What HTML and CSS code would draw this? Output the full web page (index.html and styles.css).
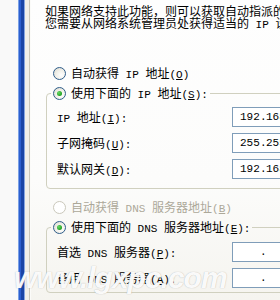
FILE: index.html
```html
<!DOCTYPE html>
<html lang="zh-CN">

<head>
    <meta charset="UTF-8">
    <meta name="viewport" content="width=device-width, initial-scale=1.0">
    <title>Internet 协议 (TCP/IP) 属性</title>
    <link rel="stylesheet" href="styles.css">
</head>

<body>
    <div class="screen">
        <div class="frame"></div>

        <div class="page">
            <p class="intro">如果网络支持此功能，则可以获取自动指派的<span class="en"> IP </span>设置。否则，<br>您需要从网络系统管理员处获得适当的<span class="en"> IP </span>设置。</p>

            <label class="radio-row first">
                <span class="radio"></span>
                <span>自动获得<span class="en"> IP </span>地址<span class="en">(<u>O</u>)</span></span>
            </label>

            <fieldset class="group">
                <legend>
                    <label class="radio-row">
                        <span class="radio checked"></span>
                        <span>使用下面的<span class="en"> IP </span>地址<span class="en">(<u>S</u>):</span></span>
                    </label>
                </legend>
                <div class="field">
                    <span class="field-label"><span class="en">IP </span>地址<span class="en">(<u>I</u>):</span></span>
                    <span class="ip-box">
                        <span class="seg">192</span><span class="dot">.</span><span class="seg">168</span><span class="dot">.</span><span class="seg">1</span><span class="dot">.</span><span class="seg">2</span>
                    </span>
                </div>
                <div class="field">
                    <span class="field-label">子网掩码<span class="en">(<u>U</u>):</span></span>
                    <span class="ip-box">
                        <span class="seg">255</span><span class="dot">.</span><span class="seg">255</span><span class="dot">.</span><span class="seg">255</span><span class="dot">.</span><span class="seg">0</span>
                    </span>
                </div>
                <div class="field">
                    <span class="field-label">默认网关<span class="en">(<u>D</u>):</span></span>
                    <span class="ip-box">
                        <span class="seg">192</span><span class="dot">.</span><span class="seg">168</span><span class="dot">.</span><span class="seg">1</span><span class="dot">.</span><span class="seg">1</span>
                    </span>
                </div>
            </fieldset>

            <label class="radio-row disabled">
                <span class="radio"></span>
                <span>自动获得<span class="en"> DNS </span>服务器地址<span class="en">(<u>B</u>)</span></span>
            </label>

            <fieldset class="group dns">
                <legend>
                    <label class="radio-row">
                        <span class="radio checked"></span>
                        <span>使用下面的<span class="en"> DNS </span>服务器地址<span class="en">(<u>E</u>):</span></span>
                    </label>
                </legend>
                <div class="field">
                    <span class="field-label">首选<span class="en"> DNS </span>服务器<span class="en">(<u>P</u>):</span></span>
                    <span class="ip-box">
                        <span class="seg"></span><span class="dot">.</span><span class="seg"></span><span class="dot">.</span><span class="seg"></span><span class="dot">.</span><span class="seg"></span>
                    </span>
                </div>
                <div class="field">
                    <span class="field-label">备用<span class="en"> DNS </span>服务器<span class="en">(<u>A</u>):</span></span>
                    <span class="ip-box">
                        <span class="seg"></span><span class="dot">.</span><span class="seg"></span><span class="dot">.</span><span class="seg"></span><span class="dot">.</span><span class="seg"></span>
                    </span>
                </div>
            </fieldset>
        </div>

        <!-- site watermark stamped over the screenshot -->
        <div class="watermark">www.lgxpc.com</div>
    </div>
</body>

</html>
```

FILE: styles.css
```css
body {
    margin: 0;
    background-color: #ffffff;
    font-family: 'Noto Sans CJK SC', sans-serif;
    font-size: 12px;
    color: #000000;
}

.screen {
    position: relative;
    display: flex;
    width: 280px;
    height: 300px;
    overflow: hidden;
}

/* window edge on the left: white, blue title strip, grey border */
.frame {
    flex: none;
    width: 31px;
    background: linear-gradient(to right,
            #f9f9f9 0 18px,
            #7aa0e6 18px 19px,
            #2c5fcf 19px 21px,
            #1a45a6 21px 24px,
            #86a6e2 24px 25px,
            #f1f0ea 25px 29px,
            #c9c7bb 29px 30px,
            #fbfbf9 30px 31px);
}

.page {
    flex: none;
    width: 430px;
    padding: 5px 0 0 14px;
    box-sizing: border-box;
    background: linear-gradient(to bottom, #fefefe 0, #fcfcfb 60%, #f5f4ef 100%);
}

/* half-width latin, like the bitmap font of the dialog */
.en {
    font-family: 'Liberation Mono', monospace;
    font-size: 11px;
    line-height: 0;
}

.intro {
    margin: 0;
    line-height: 12px;
    white-space: nowrap;
}

.radio-row {
    display: flex;
    align-items: center;
    gap: 5px;
    height: 14px;
    line-height: 14px;
    white-space: nowrap;
}

.page > .radio-row {
    margin-left: 8px;
}

.page > .radio-row.first {
    margin-top: 37px;
}

.radio {
    flex: none;
    width: 11px;
    height: 11px;
    border: 1px solid #2f5d8a;
    border-radius: 50%;
    background: radial-gradient(circle at 65% 65%, #ffffff 0, #f0efe8 50%, #d8d6cc 100%);
    display: flex;
    align-items: center;
    justify-content: center;
}

.radio.checked::after {
    content: "";
    width: 5px;
    height: 5px;
    border-radius: 50%;
    background: radial-gradient(circle at 35% 35%, #66d866 0, #21a121 70%);
}

.disabled {
    color: #aca899;
}

.disabled .radio {
    border-color: #cac8bb;
    background: #ffffff;
}

.group {
    margin: 6px 0 0 1px;
    padding: 7px 0 9px 4px;
    border: 1px solid #d0d0bf;
    border-radius: 4px;
    display: flex;
    flex-direction: column;
    gap: 6px;
}

.group legend {
    padding: 0 2px;
    line-height: 14px;
}

.group.dns {
    padding-top: 8px;
    padding-bottom: 4px;
    gap: 6px;
}

.page > .radio-row.disabled {
    margin-top: 11px;
}

.field {
    display: flex;
    align-items: center;
    height: 20px;
    padding-left: 6px;
    white-space: nowrap;
}

.field-label {
    flex: none;
    width: 175px;
    line-height: 14px;
}

.ip-box {
    display: flex;
    align-items: center;
    width: 140px;
    height: 18px;
    padding-left: 7px;
    border: 1px solid #7f9db9;
    background-color: #ffffff;
    font-family: 'Liberation Mono', monospace;
    font-size: 11px;
}

.seg {
    width: 20px;
}

.dot {
    width: 6px;
}

.watermark {
    position: absolute;
    left: 14px;
    top: 261px;
    font-family: 'Liberation Sans', sans-serif;
    font-size: 30px;
    font-weight: bold;
    font-style: italic;
    letter-spacing: -1px;
    color: rgba(255, 255, 255, 0.96);
    text-shadow: 0 0 1px rgba(140, 140, 140, 0.7);
    white-space: nowrap;
}
```
